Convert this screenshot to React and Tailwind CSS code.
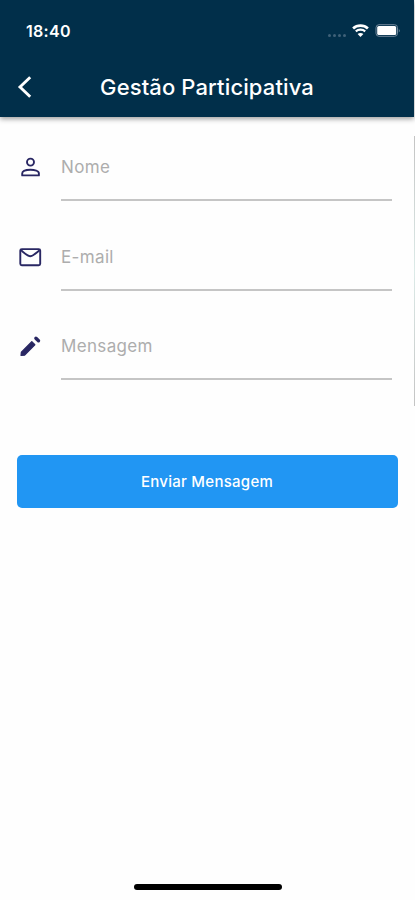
import React, { useState } from "react";

const PersonIcon = () => (
  <svg className="h-[26px] w-[26px]" viewBox="0 0 26 26" fill="none" stroke="currentColor" strokeWidth="1.9" strokeLinejoin="round">
    <circle cx="13.5" cy="8.1" r="3.5" />
    <path d="M5.2 21.4V19.6C5.2 17 9.6 15.8 13.5 15.8S21.9 17 21.9 19.6V21.4Z" />
  </svg>
);

const MailIcon = () => (
  <svg className="h-[26px] w-[26px]" viewBox="0 0 26 26" fill="none" stroke="currentColor" strokeWidth="1.9" strokeLinejoin="round">
    <rect x="3.3" y="5.1" width="19.9" height="16.2" rx="1.5" />
    <path d="M4 6.3C7.4 9 11 12.3 13.2 12.3S19 9 22.5 6.3" />
  </svg>
);

const PencilIcon = () => (
  <svg className="h-[26px] w-[26px]" viewBox="0 0 26 26" fill="currentColor" stroke="currentColor" strokeLinejoin="round">
    <path d="M4.1 22.4L4.4 19.2L14.8 8.8L17.8 11.8L7.4 22.2Z" strokeWidth="1.3" />
    <path d="M18.9 5.2L21.5 7.8" strokeWidth="3.4" strokeLinecap="round" />
  </svg>
);

const fields = [
  { name: "nome", label: "Nome", Icon: PersonIcon },
  { name: "email", label: "E-mail", Icon: MailIcon },
  { name: "mensagem", label: "Mensagem", Icon: PencilIcon },
];

const StatusBar = () => (
  <div className="flex h-[61px] items-center justify-between pl-[26px] pr-[13px] text-white">
    <span className="text-[16px] font-semibold leading-5 tracking-[0.3px]">18:40</span>
    <div className="flex items-center">
      <div className="mr-[6px] mt-[9px] flex gap-[2px]">
        {[0, 1, 2, 3].map((dot) => (
          <span key={dot} className="h-[3px] w-[3px] rounded-full bg-[#3f6178]" />
        ))}
      </div>
      <svg className="mr-[6px] h-[13px] w-[17px]" viewBox="0 0 17 13" fill="none" stroke="white">
        <path d="M1.1 4.4C5.2 .6 11.8 .6 15.9 4.4" strokeWidth="2.7" />
        <path d="M3.8 7.4C6.4 5.1 10.6 5.1 13.2 7.4" strokeWidth="2.2" />
        <path d="M8.5 13L5.6 9.9C7.3 8.6 9.7 8.6 11.4 9.9Z" fill="white" stroke="none" />
      </svg>
      <svg className="h-[13px] w-[26px]" viewBox="0 0 26 13">
        <rect x="1" y="0.7" width="21.5" height="11.6" rx="3" fill="none" stroke="#71879a" />
        <rect x="2.2" y="2" width="19" height="9" rx="1.6" fill="white" />
        <path d="M23.8 4.4Q25.6 6.5 23.8 8.6Z" fill="#71879a" />
      </svg>
    </div>
  </div>
);

const App = () => {
  const [values, setValues] = useState({ nome: "", email: "", mensagem: "" });

  return (
    <div className="relative flex h-[900px] w-[415px] flex-col overflow-hidden bg-[#fefefe] font-['Inter',sans-serif]">
      <header className="mr-px h-[117px] shrink-0 bg-[#012f4a] shadow-[0_2px_5px_rgba(0,0,0,0.38)]">
        <StatusBar />
        <div className="grid h-[52px] grid-cols-[48px_1fr_48px] items-center text-white">
          <button type="button" aria-label="Voltar" className="pl-[17px]">
            <svg className="h-[24px] w-[16px]" viewBox="0 0 16 24" fill="none" stroke="white">
              <path d="M13.2 2.2L3 12L13.2 21.8" strokeWidth="2.9" />
            </svg>
          </button>
          <h1 className="whitespace-nowrap text-center text-[22px] font-medium leading-7 tracking-[0.12px]">
            Gestão Participativa
          </h1>
        </div>
      </header>

      <form className="flex flex-col pt-[31px]" onSubmit={(e) => e.preventDefault()}>
        {fields.map(({ name, label, Icon }) => (
          <div key={name} className="flex h-[89.7px] items-start pl-[17px] pr-[23px]">
            <div className="mt-[6px] shrink-0 text-[#292763]">
              <Icon />
            </div>
            <input
              name={name}
              placeholder={label}
              value={values[name]}
              onChange={(e) => setValues({ ...values, [name]: e.target.value })}
              className="ml-[18px] h-[53px] min-w-0 flex-1 border-b-2 border-[#c5c5c5] pb-[13px] text-[17px] tracking-[0.35px] outline-none placeholder:text-[#adadad]"
            />
          </div>
        ))}
        <button
          type="submit"
          className="ml-[17px] mr-[17px] mt-[38.4px] h-[53px] rounded-[5px] bg-[#2196f3] pr-[1px] pt-[1px] text-[15px] font-medium tracking-[0.27px] text-white"
        >
          Enviar Mensagem
        </button>
      </form>

      {/* edge of the screen underneath */}
      <div className="absolute right-0 top-[136px] h-[270px] w-px bg-linear-to-b from-[#c4c4c4] via-[#dcebe8] to-[#c4c4c4]" />

      <div className="mb-[10px] ml-[134px] mt-auto h-[6px] w-[148px] rounded-full bg-black" />
    </div>
  );
};

export default App;
